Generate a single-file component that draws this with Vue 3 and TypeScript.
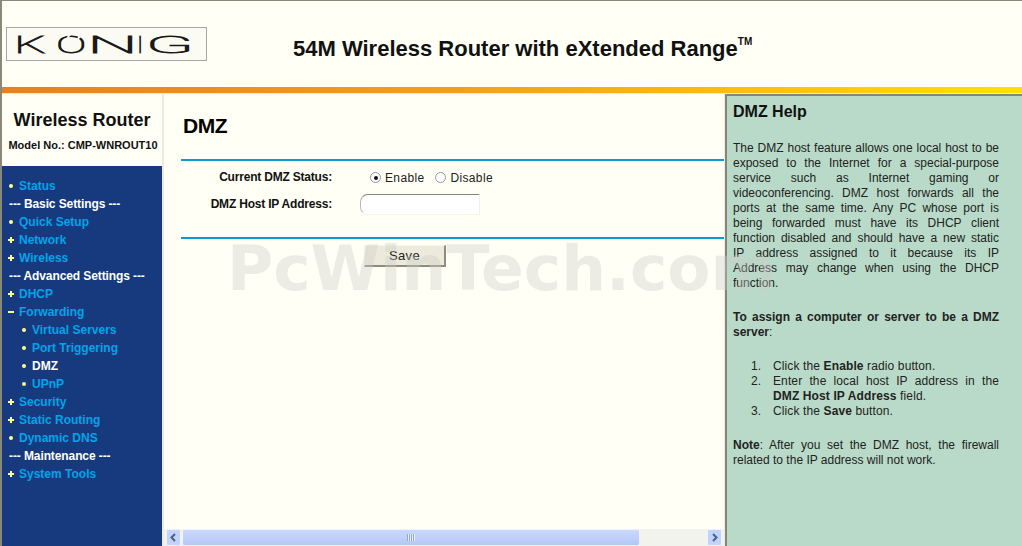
<script setup lang="ts">
type NavKind = "dot" | "plus" | "minus" | "head" | "sub"
interface NavItem { label: string; kind: NavKind; active?: boolean }

const nav: NavItem[] = [
  { label: "Status", kind: "dot" },
  { label: "--- Basic Settings ---", kind: "head" },
  { label: "Quick Setup", kind: "dot" },
  { label: "Network", kind: "plus" },
  { label: "Wireless", kind: "plus" },
  { label: "--- Advanced Settings ---", kind: "head" },
  { label: "DHCP", kind: "plus" },
  { label: "Forwarding", kind: "minus" },
  { label: "Virtual Servers", kind: "sub" },
  { label: "Port Triggering", kind: "sub" },
  { label: "DMZ", kind: "sub", active: true },
  { label: "UPnP", kind: "sub" },
  { label: "Security", kind: "plus" },
  { label: "Static Routing", kind: "plus" },
  { label: "Dynamic DNS", kind: "dot" },
  { label: "--- Maintenance ---", kind: "head" },
  { label: "System Tools", kind: "plus" },
]

// each logo letter has its own stretch
const logoLetters = [
  { ch: "K", x: 7, sx: 2.1 },
  { ch: "O", x: 49, sx: 1.9 },
  { ch: "N", x: 80, sx: 3 },
  { ch: "I", x: 130, sx: 1 },
  { ch: "G", x: 138.5, sx: 2.95 },
]

// line breaks as in the original help frame
const intro = [
  "The DMZ host feature allows one local host to be",
  "exposed to the Internet for a special-purpose",
  "service such as Internet gaming or",
  "videoconferencing. DMZ host forwards all the",
  "ports at the same time. Any PC whose port is",
  "being forwarded must have its DHCP client",
  "function disabled and should have a new static",
  "IP address assigned to it because its IP",
  "Address may change when using the DHCP",
  "function.",
]
</script>

<template>
  <div class="page">
    <header class="top">
      <div class="logo">
        <svg width="199" height="32" viewBox="0 0 199 32">
          <text
            v-for="l in logoLetters"
            :key="l.ch"
            :transform="`translate(${l.x} 25) scale(${l.sx} 1)`"
            class="logo-text"
          >{{ l.ch }}</text>
          <path d="M60 11L63 6M71 11L74 6" class="logo-gap" />
        </svg>
      </div>
      <div class="product">54M Wireless Router with eXtended Range<sup>TM</sup></div>
    </header>
    <div class="stripe"></div>

    <div class="body">
      <aside class="side">
        <div class="brand">
          <div class="brand-title">Wireless Router</div>
          <div class="brand-model">Model No.: CMP-WNROUT10</div>
        </div>
        <nav class="nav">
          <div
            v-for="item in nav"
            :key="item.label"
            class="nav-row"
            :class="[`is-${item.kind}`, { 'is-active': item.active }]"
          >
            <span v-if="item.kind !== 'head'" class="mark"></span>
            <span>{{ item.label }}</span>
          </div>
        </nav>
      </aside>

      <main class="main">
        <div class="content">
          <h1>DMZ</h1>
          <hr class="rule" />
          <div class="form">
            <label class="field-label">Current DMZ Status:</label>
            <div class="radios">
              <span class="radio on"></span><span class="radio-text">Enable</span>
              <span class="radio"></span><span class="radio-text">Disable</span>
            </div>
            <label class="field-label">DMZ Host IP Address:</label>
            <div class="host-input"></div>
          </div>
          <hr class="rule" />
          <button class="save" type="button">Save</button>
        </div>
        <div class="hscroll">
          <div class="arrow">
            <svg width="9" height="9" viewBox="0 0 9 9"><path d="M6 1L2.500 4.500L6 8" /></svg>
          </div>
          <div class="thumb"><span class="grip"></span></div>
          <div class="arrow">
            <svg width="9" height="9" viewBox="0 0 9 9"><path d="M3 1L6.500 4.500L3 8" /></svg>
          </div>
        </div>
      </main>

      <aside class="help">
        <h2>DMZ Help</h2>
        <p class="intro">
          <span v-for="line in intro" :key="line">{{ line }}</span>
        </p>
        <p><b>To assign a computer or server to be a DMZ server</b>:</p>
        <ol>
          <li><span>Click the <b>Enable</b> radio button.</span></li>
          <li><span>Enter the local host IP address in the <b>DMZ Host IP Address</b> field.</span></li>
          <li><span>Click the <b>Save</b> button.</span></li>
        </ol>
        <p><b>Note</b>: After you set the DMZ host, the firewall related to the IP address will not work.</p>
      </aside>
    </div>

    <div class="watermark">PcWinTech.com</div>
  </div>
</template>

<style>
html, body { margin: 0; height: 100%; overflow: hidden; }
</style>

<style scoped>
.page {
  position: relative;
  width: 1022px;
  height: 546px;
  box-sizing: border-box;
  border-top: 1px solid #8a8878;
  border-left: 2px solid #8a8878;
  background: #efebdc;
  display: flex;
  flex-direction: column;
  font-family: "Liberation Sans", Arial, sans-serif;
  overflow: hidden;
}
.top {
  height: 86px;
  background: #fffff5;
  display: flex;
  align-items: flex-start;
}
.logo {
  width: 199px;
  height: 32px;
  margin: 26px 0 0 4px;
  border: 1px solid #a6a6a0;
  background: #fbfbf4;
  flex: none;
}
.logo svg { display: block; }
.logo-text {
  font-family: Roboto, sans-serif;
  font-weight: 100;
  font-size: 24px;
  fill: #1a1a1a;
  stroke: #1a1a1a;
  stroke-width: 0.8;
}
.logo-gap {
  fill: none;
  stroke: #fbfbf4;
  stroke-width: 2;
}
.product {
  margin: 35px 0 0 86px;
  font-size: 22px;
  font-weight: 700;
  color: #111;
  white-space: nowrap;
}
.product sup {
  font-size: 10px;
  line-height: 0;
  vertical-align: 11px;
}
.stripe {
  height: 6px;
  background: linear-gradient(90deg, #e8801f 0%, #f2a01a 45%, #f7b80c 65%, #ffe000 100%);
}
.body {
  flex: 1;
  min-height: 0;
  display: flex;
  padding-top: 1px;
}
.side {
  width: 160px;
  flex: none;
  display: flex;
  flex-direction: column;
  background: #163a7d;
}
.brand {
  height: 72px;
  background: #fffff5;
  text-align: center;
  color: #111;
  box-sizing: border-box;
  padding-top: 15px;
}
.brand-title {
  font-size: 18px;
  line-height: 22px;
  font-weight: 700;
}
.brand-model {
  margin-top: 7px;
  padding-left: 2px;
  font-size: 11px;
  line-height: 14px;
  font-weight: 700;
}
.nav {
  padding-top: 11px;
}
.nav-row {
  height: 18px;
  line-height: 18px;
  font-size: 12px;
  font-weight: 700;
  color: #00a5ea;
  padding-left: 6px;
  display: flex;
  align-items: center;
  white-space: nowrap;
}
.nav-row.is-head {
  color: #fff;
  padding-left: 7px;
  letter-spacing: -0.1px;
}
.nav-row.is-active { color: #fff; }
.nav-row.is-sub { padding-left: 19px; }
.mark {
  position: relative;
  width: 6px;
  height: 6px;
  margin-right: 5px;
  flex: none;
}
.mark::before,
.mark::after {
  content: "";
  position: absolute;
  background: #ffff90;
}
.is-dot .mark::before,
.is-sub .mark::before {
  left: 1px;
  top: 1px;
  width: 4px;
  height: 4px;
  border-radius: 50%;
}
.is-plus .mark::before,
.is-minus .mark::before {
  left: 0;
  top: 2px;
  width: 6px;
  height: 2px;
}
.is-plus .mark::after {
  left: 2px;
  top: 0;
  width: 2px;
  height: 6px;
}
.main {
  width: 560px;
  margin-left: 2px;
  flex: none;
  background: #fffff5;
  display: flex;
  flex-direction: column;
}
.content {
  flex: 1;
  min-height: 0;
  padding-left: 17px;
  font-size: 12px;
  color: #111;
}
h1 {
  margin: 0;
  padding: 19px 0 0 2px;
  height: 46px;
  font-size: 21px;
  line-height: 26px;
  font-weight: 700;
  letter-spacing: -0.4px;
  color: #000;
}
.rule {
  margin: 0;
  border: 0;
  height: 2px;
  background: #0a9ccf;
}
.form {
  height: 76px;
  display: grid;
  grid-template-columns: 151px 1fr;
  grid-template-rows: 33px 21px;
  column-gap: 28px;
  align-items: center;
}
.field-label {
  text-align: right;
  font-weight: 700;
  font-size: 12px;
  letter-spacing: -0.2px;
  white-space: nowrap;
  position: relative;
  top: -1px;
}
.radios {
  display: flex;
  align-items: center;
  padding-left: 10px;
  font-size: 12px;
  color: #222;
}
.radio {
  width: 11px;
  height: 11px;
  box-sizing: border-box;
  border: 1px solid #8d9a9a;
  border-radius: 50%;
  background: #fff;
  margin-right: 4px;
  position: relative;
}
.radio.on::after {
  content: "";
  position: absolute;
  left: 2.500px;
  top: 2.500px;
  width: 4px;
  height: 4px;
  border-radius: 50%;
  background: #111;
}
.radio-text {
  margin-right: 11px;
  letter-spacing: 0.35px;
}
.host-input {
  width: 120px;
  height: 21px;
  box-sizing: border-box;
  background: #fff;
  border-top: 1px solid #85857a;
  border-left: 1px solid #b8b8ac;
  border-bottom: 1px solid #f4f4ea;
  border-right: 1px solid #f0f0e6;
  border-radius: 8px 0 0 8px;
}
.save {
  display: block;
  margin: 6px 0 0 183px;
  width: 82px;
  height: 22px;
  padding: 0;
  border: 0;
  border-top: 1px solid #f6f5ea;
  border-left: 1px solid #f6f5ea;
  border-right: 2px solid #8c8c80;
  border-bottom: 2px solid #8c8c80;
  background: #eceadb;
  font-family: inherit;
  font-size: 13px;
  color: #222;
  letter-spacing: 0.4px;
}
.hscroll {
  height: 17px;
  flex: none;
  display: flex;
  align-items: stretch;
  padding: 0 1px;
  background: #f3f3ee;
}
.arrow {
  width: 15px;
  margin: 0 1px;
  background: #c2d3fb;
  border: 1px solid #eef3ff;
  border-radius: 2px;
  box-sizing: border-box;
  display: flex;
  align-items: center;
  justify-content: center;
}
.arrow path {
  fill: none;
  stroke: #4d6185;
  stroke-width: 2;
}
.thumb {
  width: 458px;
  margin-right: auto;
  background: linear-gradient(180deg, #c9d8fc, #b4c8f6);
  border: 1px solid #eef3ff;
  border-radius: 2px;
  box-sizing: border-box;
  display: flex;
  align-items: center;
  justify-content: center;
}
.grip {
  width: 8px;
  height: 7px;
  background: repeating-linear-gradient(90deg, #8fa8e0 0 1px, #e6edff 1px 2px);
}
.help {
  flex: 1;
  min-width: 0;
  margin-left: 1px;
  background: #b9dac8;
  border-top: 2px solid #85857a;
  border-left: 2px solid #85857a;
  box-sizing: border-box;
  padding: 6px 23px 0 6px;
  font-size: 12px;
  line-height: 15px;
  color: #222;
}
.help h2 {
  margin: 0;
  font-size: 16px;
  line-height: 20px;
  font-weight: 700;
  color: #111;
}
.help p {
  margin: 19px 0 0;
  text-align: justify;
}
.intro span {
  display: block;
  text-align: justify;
  text-align-last: justify;
}
.intro span:last-child { text-align-last: left; }
.help ol {
  margin: 19px 0 0;
  padding: 0 0 0 18px;
  list-style: none;
  counter-reset: step;
  letter-spacing: 0.12px;
}
.help li {
  display: grid;
  grid-template-columns: 22px 1fr;
  counter-increment: step;
  text-align: justify;
}
.help li::before {
  content: counter(step) ".";
}
.watermark {
  position: absolute;
  left: 225px;
  top: 235px;
  font-size: 63px;
  line-height: 66px;
  font-weight: 700;
  font-family: "DejaVu Sans", sans-serif;
  color: rgba(205, 205, 200, 0.38);
  white-space: nowrap;
  pointer-events: none;
}
</style>
